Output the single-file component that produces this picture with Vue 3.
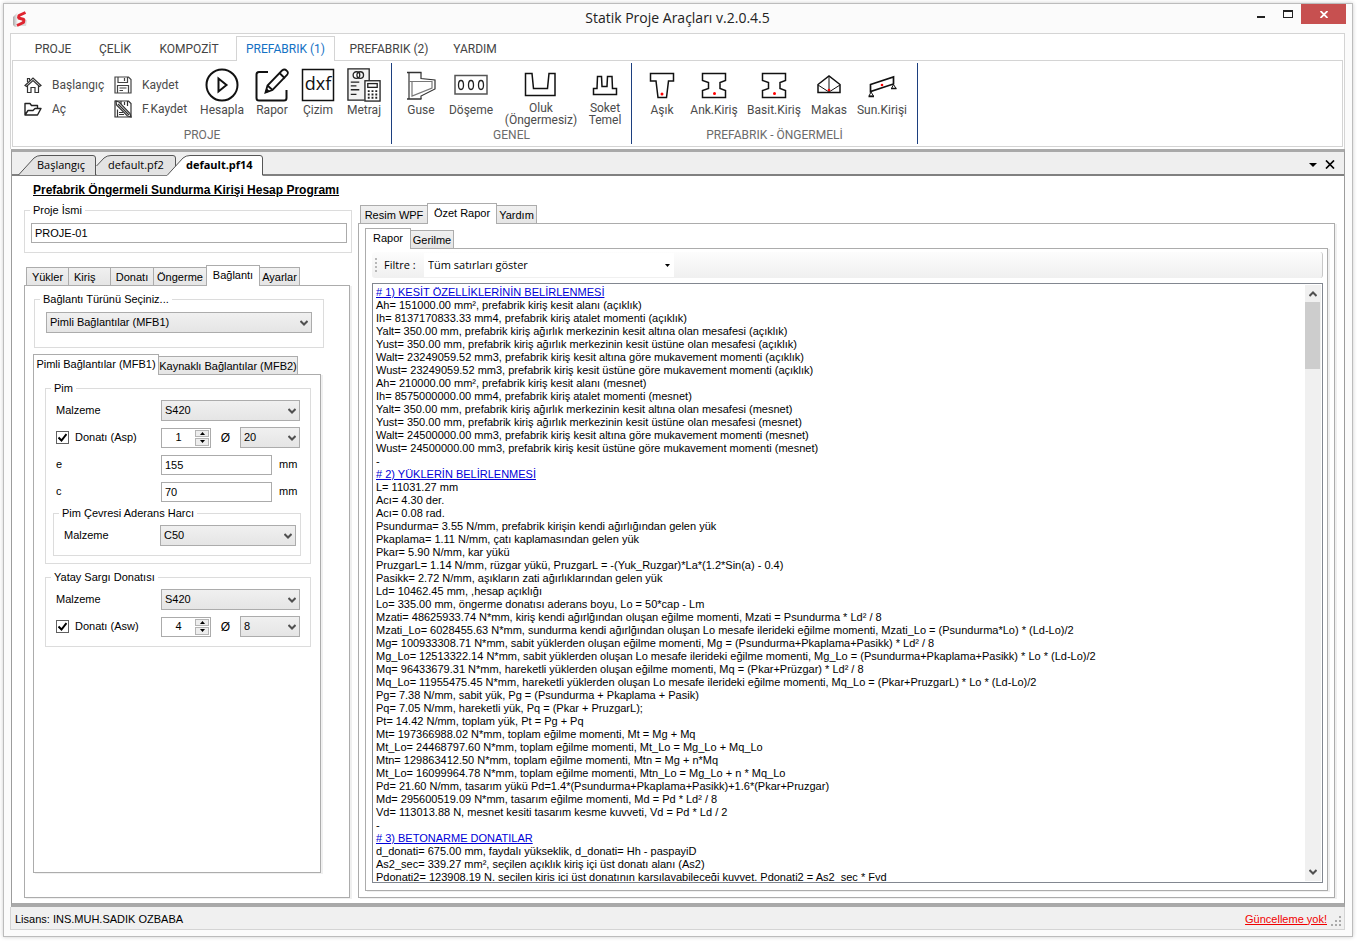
<script setup>
import { ref } from 'vue'

const ribbonTabs = [
  { text: 'PROJE', cls: 'w62' },
  { text: 'ÇELİK', cls: 'w62' },
  { text: 'KOMPOZİT', cls: 'w86' },
  { text: 'PREFABRIK (1)', cls: 'active' },
  { text: 'PREFABRIK (2)', cls: 'w108' },
  { text: 'YARDIM', cls: 'w64' },
]
const sideTabs = [
  { text: 'Yükler', cls: 'w43' },
  { text: 'Kiriş', cls: 'w43 start' },
  { text: 'Donatı', cls: 'w44' },
  { text: 'Öngerme', cls: 'w54' },
  { text: 'Bağlantı', cls: 'w54 active' },
  { text: 'Ayarlar', cls: 'w41' },
]
const projectName = ref('PROJE-01')
const aspOn = ref(true)
const aswOn = ref(true)
const aspCount = ref(1)
const aswCount = ref(4)
const eValue = ref('155')
const cValue = ref('70')

const report = `# 1) KESİT ÖZELLİKLERİNİN BELİRLENMESİ
Ah= 151000.00 mm², prefabrik kiriş kesit alanı (açıklık)
Ih= 8137170833.33 mm4, prefabrik kiriş atalet momenti (açıklık)
Yalt= 350.00 mm, prefabrik kiriş ağırlık merkezinin kesit altına olan mesafesi (açıklık)
Yust= 350.00 mm, prefabrik kiriş ağırlık merkezinin kesit üstüne olan mesafesi (açıklık)
Walt= 23249059.52 mm3, prefabrik kiriş kesit altına göre mukavement momenti (açıklık)
Wust= 23249059.52 mm3, prefabrik kiriş kesit üstüne göre mukavement momenti (açıklık)
Ah= 210000.00 mm², prefabrik kiriş kesit alanı (mesnet)
Ih= 8575000000.00 mm4, prefabrik kiriş atalet momenti (mesnet)
Yalt= 350.00 mm, prefabrik kiriş ağırlık merkezinin kesit altına olan mesafesi (mesnet)
Yust= 350.00 mm, prefabrik kiriş ağırlık merkezinin kesit üstüne olan mesafesi (mesnet)
Walt= 24500000.00 mm3, prefabrik kiriş kesit altına göre mukavement momenti (mesnet)
Wust= 24500000.00 mm3, prefabrik kiriş kesit üstüne göre mukavement momenti (mesnet)
-
# 2) YÜKLERİN BELİRLENMESİ
L= 11031.27 mm
Acı= 4.30 der.
Acı= 0.08 rad.
Psundurma= 3.55 N/mm, prefabrik kirişin kendi ağırlığından gelen yük
Pkaplama= 1.11 N/mm, çatı kaplamasından gelen yük
Pkar= 5.90 N/mm, kar yükü
PruzgarL= 1.14 N/mm, rüzgar yükü, PruzgarL = -(Yuk_Ruzgar)*La*(1.2*Sin(a) - 0.4)
Pasikk= 2.72 N/mm, aşıkların zati ağırlıklarından gelen yük
Ld= 10462.45 mm, ,hesap açıklığı
Lo= 335.00 mm, öngerme donatısı aderans boyu, Lo = 50*cap - Lm
Mzati= 48625933.74 N*mm, kiriş kendi ağırlğından oluşan eğilme momenti, Mzati = Psundurma * Ld² / 8
Mzati_Lo= 6028455.63 N*mm, sundurma kendi ağırlğından oluşan Lo mesafe ilerideki eğilme momenti, Mzati_Lo = (Psundurma*Lo) * (Ld-Lo)/2
Mg= 100933308.71 N*mm, sabit yüklerden oluşan eğilme momenti, Mg = (Psundurma+Pkaplama+Pasikk) * Ld² / 8
Mg_Lo= 12513322.14 N*mm, sabit yüklerden oluşan Lo mesafe ilerideki eğilme momenti, Mg_Lo = (Psundurma+Pkaplama+Pasikk) * Lo * (Ld-Lo)/2
Mq= 96433679.31 N*mm, hareketli yüklerden oluşan eğilme momenti, Mq = (Pkar+Prüzgar) * Ld² / 8
Mq_Lo= 11955475.45 N*mm, hareketli yüklerden oluşan Lo mesafe ilerideki eğilme momenti, Mq_Lo = (Pkar+PruzgarL) * Lo * (Ld-Lo)/2
Pg= 7.38 N/mm, sabit yük, Pg = (Psundurma + Pkaplama + Pasik)
Pq= 7.05 N/mm, hareketli yük, Pq = (Pkar + PruzgarL);
Pt= 14.42 N/mm, toplam yük, Pt = Pg + Pq
Mt= 197366988.02 N*mm, toplam eğilme momenti, Mt = Mg + Mq
Mt_Lo= 24468797.60 N*mm, toplam eğilme momenti, Mt_Lo = Mg_Lo + Mq_Lo
Mtn= 129863412.50 N*mm, toplam eğilme momenti, Mtn = Mg + n*Mq
Mt_Lo= 16099964.78 N*mm, toplam eğilme momenti, Mtn_Lo = Mg_Lo + n * Mq_Lo
Pd= 21.60 N/mm, tasarım yükü Pd=1.4*(Psundurma+Pkaplama+Pasikk)+1.6*(Pkar+Pruzgar)
Md= 295600519.09 N*mm, tasarım eğilme momenti, Md = Pd * Ld² / 8
Vd= 113013.88 N, mesnet kesiti tasarım kesme kuvveti, Vd = Pd * Ld / 2
-
# 3) BETONARME DONATILAR
d_donati= 675.00 mm, faydalı yükseklik, d_donati= Hh - paspayiD
As2_sec= 339.27 mm², seçilen açıklık kiriş içi üst donatı alanı (As2)
Pdonati2= 123908.19 N, seçilen kiriş içi üst donatının karşılayabileceği kuvvet, Pdonati2 = As2_sec * Fyd`.split('\n')
</script>

<template>
  <div class="window">
    <header class="titlebar">
      <svg class="logo" width="16" height="17" viewBox="0 0 16 17">
        <defs>
          <linearGradient id="logoShade" x1="0" x2="1"><stop offset="0" stop-color="#a8a8a8" /><stop offset="1" stop-color="#fbfbfb" /></linearGradient>
        </defs>
        <path d="M0 6L5 1V16H2L0 14Z" fill="url(#logoShade)" />
        <path d="M4 15H13L14 9L9 10Z" fill="#dcdcdc" />
        <path d="M12.500 1.500L6 4.500L5.500 7L11 8.500L10.500 11.500L4 14.500" fill="none" stroke="#df2530" stroke-width="3" stroke-linejoin="bevel" />
      </svg>
      <h1>Statik Proje Araçları v.2.0.4.5</h1>
      <div class="winbtns">
        <button type="button" aria-label="Simge durumuna küçült" class="wmin"><svg width="8" height="2"><path d="M0 0H8V2H0Z" fill="#222" /></svg></button>
        <button type="button" aria-label="Ekranı kapla" class="wmax"><svg width="10" height="8"><path d="M0 0H10V8H0ZM1 2V7H9V2Z" fill="#222" fill-rule="evenodd" /></svg></button>
        <button type="button" aria-label="Kapat" class="wclose"><svg width="8" height="7" viewBox="0 0 8 7"><path d="M0.500 0L7.500 7M7.500 0L0.500 7" stroke="#fff" stroke-width="1.800" /></svg></button>
      </div>
    </header>

    <section class="ribbon">
      <nav class="rtabs">
        <button v-for="t in ribbonTabs" :key="t.text" type="button" :class="t.cls">{{ t.text }}</button>
      </nav>
      <div class="rbody">
        <div class="rgroup g1">
          <div class="items">
            <div class="smallcol c1">
              <button type="button">
                <svg width="18" height="18" viewBox="0 0 18 18" fill="none" stroke="#333" stroke-width="1.200"><path d="M1 9.500L9 2L17 9.500L15.500 10.500L9 4.500L2.500 10.500Z" /><path d="M3.500 10V16.500H7V11.500H11V16.500H14.500V10M3.500 6V2.500H5.500V4.500" /></svg>
                Başlangıç
              </button>
              <button type="button">
                <svg width="18" height="18" viewBox="0 0 18 18" fill="none" stroke="#222" stroke-width="1.400" stroke-linejoin="round"><path d="M1 15V3.500H6L7.500 5.500H13.500V8M1 15L4 10.500H9L11 8.500H17L13.500 15H1Z" /></svg>
                Aç
              </button>
            </div>
            <div class="smallcol c2">
              <button type="button">
                <svg width="18" height="18" viewBox="0 0 18 18" fill="none" stroke="#444" stroke-width="1.200"><path d="M1 1H14.500L17 3.500V17H1ZM4 1V6.500H13.500V1M10.500 2V5M3.500 17V9.500H14.500V17M5.500 12H12.500M5.500 14.500H9" /></svg>
                Kaydet
              </button>
              <button type="button">
                <svg width="18" height="18" viewBox="0 0 18 18" fill="none" stroke="#333" stroke-width="1.200"><path d="M1 1H14.500L17 3.500V17H1ZM7 1V4M13.500 1V6M10.500 2V5M3.500 17V9.500M5 12.500H9M5 14.500H10" /><path d="M2 1L5 2L16 13.500L17 17L13.500 16L2.500 5Z" fill="#fff" /><path d="M4 4L15 15" /></svg>
                F.Kaydet
              </button>
            </div>
            <button type="button" class="big w50">
              <svg width="34" height="34" viewBox="0 0 34 34" fill="none" stroke="#111" stroke-width="2"><circle cx="17" cy="17" r="15.500" /><path d="M13.500 10.500V23.500L21.500 17Z" /></svg>
              <span>Hesapla</span>
            </button>
            <button type="button" class="big w50">
              <svg width="34" height="34" viewBox="0 0 34 34" fill="none" stroke="#111" stroke-width="2"><path d="M13 4H4Q1.500 4 1.500 6.500V30Q1.500 32.500 4 32.500H29Q31.500 32.500 31.500 30V22" /><path d="M10.500 24.500L12.500 17.500L27 2.500Q29.500 0.500 31.500 2.500Q34 4.500 32 7L17.500 22Z M24.500 5L30 10.500M12.500 17.500L17.500 22" stroke-width="1.800" /><path d="M10 25L11.500 20L15 23.500Z" fill="#111" stroke="none" /></svg>
              <span>Rapor</span>
            </button>
            <button type="button" class="big w42">
              <svg width="34" height="34" viewBox="0 0 34 34"><rect x="1.500" y="1.500" width="31" height="31" fill="#fff" stroke="#111" stroke-width="1.500" /><text x="17" y="22" text-anchor="middle" class="dxf">dxf</text></svg>
              <span>Çizim</span>
            </button>
            <button type="button" class="big w50">
              <svg width="36" height="36" viewBox="0 0 36 36" fill="none" stroke="#222" stroke-width="1.400"><path d="M18.500 34H1V1H23.500V13.500" fill="#f2f2f2" /><circle cx="10" cy="7.500" r="3.500" fill="#fff" /><circle cx="14" cy="7.500" r="3.500" /><path d="M4 15H13M4 19H10M4 23H13M4 28H10" /><rect x="19" y="13.500" width="16" height="21.500" fill="#fff" /><rect x="22" y="16.500" width="10" height="4" /><path d="M22 24.500H32M22 28H32M22 31.500H32" stroke-width="2" stroke-dasharray="2 2" /></svg>
              <span>Metraj</span>
            </button>
          </div>
          <div class="gname">PROJE</div>
        </div>

        <div class="rgroup g2">
          <div class="items">
            <button type="button" class="big w50">
              <svg width="34" height="34" viewBox="0 0 34 34" fill="none" stroke="#333" stroke-width="1.200"><path d="M3 4.500H17.500M3 31H17.500" stroke-width="1.500" /><path d="M5 4.500V31M17 4.500V10.500L31 12V21L17 28V31" /><path d="M5 13.500H28V20L8 28V13.500" stroke="#777" /></svg>
              <span>Guse</span>
            </button>
            <button type="button" class="big w50">
              <svg width="34" height="34" viewBox="0 0 34 34" fill="none" stroke="#222" stroke-width="1.300"><path d="M1 7.500H33V26H1Z" stroke="#555" stroke-width="1.500" /><ellipse cx="7" cy="17" rx="2.500" ry="4.500" /><ellipse cx="17" cy="17" rx="2.500" ry="4.500" /><ellipse cx="27" cy="17" rx="2.500" ry="4.500" /></svg>
              <span>Döşeme</span>
            </button>
            <button type="button" class="big two w90">
              <svg width="34" height="34" viewBox="0 0 34 34" fill="none" stroke="#111" stroke-width="1.500"><path d="M1.500 27.500V5.500H8L9.500 20.500H23.500L25 5.500H31V27.500Z" /></svg>
              <span>Oluk<br />(Öngermesiz)</span>
            </button>
            <button type="button" class="big two w38">
              <svg width="34" height="34" viewBox="0 0 34 34" fill="none" stroke="#111" stroke-width="1.500"><path d="M5.500 26.500V20.500H9L9.500 8.500H13.500L14 18.500H19L19.500 8.500H24L24.500 20.500H28.500V26.500Z" /></svg>
              <span>Soket<br />Temel</span>
            </button>
          </div>
          <div class="gname">GENEL</div>
        </div>

        <div class="rgroup g3">
          <div class="items">
            <button type="button" class="big w50">
              <svg width="34" height="34" viewBox="0 0 34 34" fill="none" stroke="#111" stroke-width="1.500"><path d="M5.500 5.500H28.500V13H23.500L21.500 29.500H13L11 13H5.500Z" /><circle cx="17" cy="26" r="1.500" fill="#f00" stroke="none" /></svg>
              <span>Aşık</span>
            </button>
            <button v-for="b in [{ t: 'Ank.Kiriş', c: 'w54' }, { t: 'Basit.Kiriş', c: 'w66' }]" :key="b.t" type="button" class="big" :class="b.c">
              <svg width="34" height="34" viewBox="0 0 34 34" fill="none" stroke="#111" stroke-width="1.500"><path d="M5.500 5.500H28.500V12.500L23 14.500V20.500L28.500 22.500V29.500H5.500V22.500L11.500 20.500V14.500L5.500 12.500Z" /><circle cx="17.500" cy="25.500" r="1.500" fill="#f00" stroke="none" /></svg>
              <span>{{ b.t }}</span>
            </button>
            <button type="button" class="big w44">
              <svg width="34" height="34" viewBox="0 0 34 34" fill="none" stroke="#111" stroke-width="1.500"><path d="M6 24.500V16.500L17 8L28 16.500V24.500Z" /><path d="M17 8V23M6 17L17 24L28 17" stroke-width="1" /><circle cx="17" cy="22" r="1.300" fill="#f00" stroke="none" /></svg>
              <span>Makas</span>
            </button>
            <button type="button" class="big w62">
              <svg width="34" height="34" viewBox="0 0 34 34" fill="none" stroke="#111" stroke-width="1.700"><path d="M5.500 16.500L28.500 9V16L5.500 23.500Z" /><path d="M6 24L4 28H8.500ZM28.500 16.500L26.500 20.500H31Z" stroke-width="1" /><path d="M3.500 28.500H9M26 20.500H31.500" stroke-width="1.500" /><circle cx="17" cy="17" r="1.300" fill="#f00" stroke="none" /></svg>
              <span>Sun.Kirişi</span>
            </button>
          </div>
          <div class="gname">PREFABRIK - ÖNGERMELİ</div>
        </div>
      </div>
    </section>

    <main class="dock">
      <nav class="doctabs">
        <button type="button" class="dt d1">
          <svg width="79" height="20" viewBox="0 0 79 20"><path d="M0.500 20L16 3Q19 0.500 23 0.500H75Q77.500 0.500 77.500 3V20" fill="#e3e3e3" stroke="#555" /></svg><span>Başlangıç</span>
        </button>
        <button type="button" class="dt d2">
          <svg width="81" height="20" viewBox="0 0 81 20"><path d="M0.500 20V11L8 3Q11 0.500 15 0.500H77Q79.500 0.500 79.500 3V20" fill="#e3e3e3" /><path d="M0.500 11L8 3Q11 0.500 15 0.500H77Q79.500 0.500 79.500 3V20" fill="none" stroke="#555" /></svg><span>default.pf2</span>
        </button>
        <button type="button" class="dt d3">
          <svg width="97" height="22" viewBox="0 0 97 22"><path d="M0.500 20L16 3Q19 0.500 23 0.500H93Q95.500 0.500 95.500 3V20V22H0Z" fill="#fff" /><path d="M0.500 20L16 3Q19 0.500 23 0.500H93Q95.500 0.500 95.500 3V20" fill="none" stroke="#555" /></svg><span>default.pf14</span>
        </button>
        <div class="dtools">
          <button type="button" aria-label="Sekme listesi"><svg width="8" height="4"><path d="M0 0H8L4 4Z" fill="#000" /></svg></button>
          <button type="button" aria-label="Sekmeyi kapat"><svg width="10" height="9" viewBox="0 0 10 9"><path d="M1 0.500L9 8.500M9 0.500L1 8.500" stroke="#000" stroke-width="1.700" /></svg></button>
        </div>
      </nav>

      <div class="doc">
        <div class="left">
          <h2>Prefabrik Öngermeli Sundurma Kirişi Hesap Programı</h2>
          <fieldset class="fs proj">
            <legend><label for="pname">Proje İsmi</label></legend>
            <input id="pname" v-model="projectName" type="text" class="tb" />
          </fieldset>

          <div class="tabs side">
            <button v-for="t in sideTabs" :key="t.text" type="button" :class="t.cls">{{ t.text }}</button>
          </div>
          <div class="panel sidepanel">
            <fieldset class="fs conn">
              <legend><label for="ctype">Bağlantı Türünü Seçiniz...</label></legend>
              <div class="sel">
                <select id="ctype"><option>Pimli Bağlantılar (MFB1)</option><option>Kaynaklı Bağlantılar (MFB2)</option></select>
                <svg width="8" height="6" viewBox="0 0 8 6"><path d="M0.500 1L4 4.500L7.500 1" /></svg>
              </div>
            </fieldset>

            <div class="tabs mfb">
              <button type="button" class="w126 active">Pimli Bağlantılar (MFB1)</button>
              <button type="button" class="w140">Kaynaklı Bağlantılar (MFB2)</button>
            </div>
            <div class="panel mfbpanel">
              <fieldset class="fs pim">
                <legend>Pim</legend>
                <div class="row">
                  <label for="pmat">Malzeme</label>
                  <div class="sel"><select id="pmat"><option>S420</option></select><svg width="8" height="6" viewBox="0 0 8 6"><path d="M0.500 1L4 4.500L7.500 1" /></svg></div>
                </div>
                <div class="row">
                  <label class="chk"><span class="cbx"><input v-model="aspOn" type="checkbox" /><svg v-if="aspOn" width="9" height="9" viewBox="0 0 9 9"><path d="M0.500 4.500L3.500 7.500L8.500 1" /></svg></span>Donatı (Asp)</label>
                  <div class="multi">
                    <div class="spin">
                      <input v-model.number="aspCount" type="number" aria-label="Donatı (Asp) adedi" />
                      <div class="ud"><button type="button" aria-label="Artır" @click="aspCount++"><svg width="5" height="3"><path d="M0 3L2.500 0L5 3Z" /></svg></button><button type="button" aria-label="Azalt" @click="aspCount--"><svg width="5" height="3"><path d="M0 0L2.500 3L5 0Z" /></svg></button></div>
                    </div>
                    <label for="pdia" class="dia">Ø</label>
                    <div class="sel"><select id="pdia"><option>20</option></select><svg width="8" height="6" viewBox="0 0 8 6"><path d="M0.500 1L4 4.500L7.500 1" /></svg></div>
                  </div>
                </div>
                <div class="row">
                  <label for="ev">e</label>
                  <div class="unit"><input id="ev" v-model="eValue" type="text" class="tb" /><span>mm</span></div>
                </div>
                <div class="row">
                  <label for="cv">c</label>
                  <div class="unit"><input id="cv" v-model="cValue" type="text" class="tb" /><span>mm</span></div>
                </div>
                <fieldset class="fs harc">
                  <legend>Pim Çevresi Aderans Harcı</legend>
                  <div class="row">
                    <label for="hmat">Malzeme</label>
                    <div class="sel"><select id="hmat"><option>C50</option></select><svg width="8" height="6" viewBox="0 0 8 6"><path d="M0.500 1L4 4.500L7.500 1" /></svg></div>
                  </div>
                </fieldset>
              </fieldset>

              <fieldset class="fs sargi">
                <legend>Yatay Sargı Donatısı</legend>
                <div class="row">
                  <label for="smat">Malzeme</label>
                  <div class="sel"><select id="smat"><option>S420</option></select><svg width="8" height="6" viewBox="0 0 8 6"><path d="M0.500 1L4 4.500L7.500 1" /></svg></div>
                </div>
                <div class="row">
                  <label class="chk"><span class="cbx"><input v-model="aswOn" type="checkbox" /><svg v-if="aswOn" width="9" height="9" viewBox="0 0 9 9"><path d="M0.500 4.500L3.500 7.500L8.500 1" /></svg></span>Donatı (Asw)</label>
                  <div class="multi">
                    <div class="spin">
                      <input v-model.number="aswCount" type="number" aria-label="Donatı (Asw) adedi" />
                      <div class="ud"><button type="button" aria-label="Artır" @click="aswCount++"><svg width="5" height="3"><path d="M0 3L2.500 0L5 3Z" /></svg></button><button type="button" aria-label="Azalt" @click="aswCount--"><svg width="5" height="3"><path d="M0 0L2.500 3L5 0Z" /></svg></button></div>
                    </div>
                    <label for="sdia" class="dia">Ø</label>
                    <div class="sel"><select id="sdia"><option>8</option></select><svg width="8" height="6" viewBox="0 0 8 6"><path d="M0.500 1L4 4.500L7.500 1" /></svg></div>
                  </div>
                </div>
              </fieldset>
            </div>
          </div>
        </div>

        <div class="right">
          <div class="tabs outer">
            <button type="button" class="w68">Resim WPF</button>
            <button type="button" class="w70 active">Özet Rapor</button>
            <button type="button" class="w41">Yardım</button>
          </div>
          <div class="panel outerpanel">
            <div class="tabs inner">
              <button type="button" class="w46 active">Rapor</button>
              <button type="button" class="w44">Gerilme</button>
            </div>
            <div class="panel innerpanel">
              <div class="toolbar">
                <i class="grip"></i>
                <label for="filter">Filtre :</label>
                <div class="filter">
                  <select id="filter"><option>Tüm satırları göster</option></select>
                  <svg width="5" height="3"><path d="M0 0H5L2.500 3Z" /></svg>
                </div>
              </div>
              <div class="report">
                <div class="lines">
                  <div v-for="(l, i) in report" :key="i" :class="{ head: l.startsWith('#') }"><span>{{ l }}</span></div>
                </div>
                <div class="scroll">
                  <svg width="8" height="6" viewBox="0 0 8 6"><path d="M0.500 5L4 1.500L7.500 5" /></svg>
                  <div class="track"><div class="thumb"></div></div>
                  <svg width="8" height="6" viewBox="0 0 8 6"><path d="M0.500 1L4 4.500L7.500 1" /></svg>
                </div>
              </div>
            </div>
          </div>
        </div>
      </div>
    </main>

    <footer class="status">
      <span>Lisans: INS.MUH.SADIK OZBABA</span>
      <a href="#">Güncelleme yok!</a>
      <svg width="11" height="11" viewBox="0 0 11 11" fill="#aaa"><path d="M8 0H10V2H8ZM4 4H6V6H4ZM8 4H10V6H8ZM0 8H2V10H0ZM4 8H6V10H4ZM8 8H10V10H8Z" /></svg>
    </footer>
  </div>
</template>

<style>
html, body { background: #fff; }
body { overflow: hidden; }
</style>

<style scoped>
* { box-sizing: border-box; }
.window {
  height: calc(100vh - 8px); margin: 3px 4px 5px 3px; padding: 0 7px 6px 6px;
  display: flex; flex-direction: column;
  background: #fbfbfb; border: 1px solid #bcbcbc; box-shadow: 0 0 4px #ccc;
  font-family: "Liberation Sans", Arial, sans-serif; font-size: 11px; line-height: 13px; color: #000;
}
button, input, select { font: inherit; color: inherit; margin: 0; padding: 0; border: 0; background: none; border-radius: 0; outline: 0; }
svg { display: block; flex: none; }

.titlebar { display: grid; grid-template-columns: 1fr auto 1fr; height: 29px; }
.logo { margin: 7px 0 0 3px; }
.titlebar h1 { margin: 0; font: 400 14px/28px "Open Sans", sans-serif; color: #222; }
.winbtns { display: flex; justify-content: flex-end; align-items: flex-start; margin-right: -1px; }
.winbtns button { display: flex; justify-content: center; height: 20px; width: 27px; }
.winbtns .wmin { padding-top: 12px; }
.winbtns .wmax { padding-top: 6px; }
.winbtns .wclose { width: 45px; background: #c75050; padding-top: 7px; }

.ribbon { background: #fff; border: 1px solid #d4d4d4; border-bottom: 0; padding: 2px 1px; flex: none; }
.rtabs { display: flex; padding-left: 10px; font: 400 12px/24px Roboto, sans-serif; color: #444; height: 24px; }
.rtabs button { height: 25px; white-space: nowrap; }
.rtabs .active { position: relative; width: 99px; margin-left: 4px; border: 1px solid #d4d4d4; border-bottom: 0; background: #fff; color: #1471c4; line-height: 22px; }
.rbody { display: flex; height: 87px; border: 1px solid #d4d4d4; padding: 2px 0; }
.rgroup { display: flex; flex-direction: column; border-right: 1px solid #1c3f7f; color: #4b4b4b; font: 400 12px/12px Roboto, sans-serif; }
.items { display: flex; flex: 1; min-height: 0; }
.g1 .items { padding-left: 11px; padding-right: 2px; }
.g2 .items { padding-left: 4px; padding-right: 7px; }
.g3 .items { padding-left: 5px; padding-right: 4px; }
.smallcol { padding-top: 10px; }
.smallcol button { display: flex; align-items: center; gap: 10px; height: 24px; white-space: nowrap; }
.c1 { width: 90px; }
.c2 { width: 83px; }
.big { display: flex; flex-direction: column; align-items: center; justify-content: flex-start; padding-top: 5px; }
.big span { white-space: nowrap; margin-top: 2px; }
.big.two span { margin-top: 0; }
.big svg { height: 34px; }
.dxf { font: 18px "Open Sans", sans-serif; fill: #111; }
.gname { text-align: center; color: #6b6b6b; line-height: 14px; height: 16px; flex: none; }

.w41 { width: 41px; } .w42 { width: 42px; } .w43 { width: 43px; } .w44 { width: 44px; } .w38 { width: 38px; }
.w46 { width: 46px; } .w50 { width: 50px; } .w54 { width: 54px; } .w62 { width: 62px; } .w64 { width: 64px; }
.w66 { width: 66px; } .w68 { width: 68px; } .w70 { width: 70px; } .w86 { width: 86px; } .w90 { width: 90px; }
.w108 { width: 108px; } .w126 { width: 126px; } .w140 { width: 140px; }

.dock { flex: 1; min-height: 0; display: flex; flex-direction: column; border: 1px solid #9c9c9c; border-top: 3px solid #a9a9a9; border-bottom: 4px solid #a9a9a9; margin-left: 1px; background: #fff; }
.doctabs { display: flex; height: 24px; padding: 3px 9px 0 6px; background: #efefef; border-bottom: 2px solid #808080; font: 400 11px/18px "Open Sans", sans-serif; flex: none; }
.dt { position: relative; height: 20px; text-align: left; white-space: nowrap; }
.dt svg { position: absolute; left: 0; top: 0; }
.dt span { position: relative; }
.d1 { width: 78px; padding-left: 19px; }
.d2 { width: 80px; padding-left: 12px; }
.d3 { width: 96px; margin-left: -9px; padding-left: 19px; font-weight: 700; }
.dtools { margin-left: auto; display: flex; align-items: center; gap: 8px; }

.doc { flex: 1; min-height: 0; display: flex; gap: 6px; padding: 0 9px 5px 12px; }
.left { width: 328px; flex: none; display: flex; flex-direction: column; }
.left h2 { margin: 8px 0 7px 9px; font-size: 12px; line-height: 13px; font-weight: 700; text-decoration: underline; white-space: nowrap; }
.fs { margin: 0; padding: 0; border: 1px solid #dcdcdc; min-width: 0; }
legend { margin-left: -5px; padding: 0 3px; line-height: 13px; height: 13px; }
.tb { border: 1px solid #ababab; background: #fff; height: 20px; padding: 0 3px; width: 100%; display: block; }
.proj { padding: 6px 4px 9px 6px; }
.proj legend { margin-left: -1px; }
.tabs { display: flex; align-items: flex-end; height: 20px; flex: none; }
.tabs button { height: 18px; border: 1px solid #acacac; border-bottom: 0; margin-left: -1px; background: linear-gradient(#f0f0f0, #e5e5e5); text-align: center; white-space: nowrap; padding-top: 2px; flex: none; }
.tabs button:first-child { margin-left: 0; }
.tabs .active { position: relative; z-index: 1; height: 21px; padding: 0 0 2px; background: #fff; margin-bottom: -1px; }
.tabs .start { text-align: left; text-indent: 5px; }
.side { margin: 12px 0 0 2px; }
.panel { border: 1px solid #acacac; background: #fff; box-shadow: 2px 1px 0 #f0f0f0; display: flex; flex-direction: column; flex: 1; min-height: 0; }
.sidepanel { width: 326px; padding: 7px 0 24px; }
.conn { margin: 0 25px 0 9px; padding: 6px 11px 14px 11px; }
.conn legend { margin-left: -6px; }
.mfb { margin: 6px 0 0 8px; }
.mfbpanel { margin: 0 28px 0 8px; padding: 7px 9px 0 11px; }
.sel { position: relative; }
.sel select { appearance: none; display: block; width: 100%; height: 21px; padding: 0 3px; border: 1px solid #acacac; background: linear-gradient(#f0f0f0, #e5e5e5); }
.sel svg { position: absolute; right: 4px; top: 8px; pointer-events: none; fill: none; stroke: #505050; stroke-width: 2; }
.row { display: grid; grid-template-columns: 105px 1fr; align-items: center; height: 21px; }
.row + .row { margin-top: 6px; }
.pim { padding: 5px 10px 7px 10px; }
.harc { margin: 5px -1px 0 -3px; padding: 5px 4px 9px 10px; }
.harc .row { grid-template-columns: 96px 1fr; }
.sargi { margin-top: 7px; padding: 5px 10px 9px 10px; }
.chk { display: flex; align-items: center; gap: 6px; }
.cbx { position: relative; width: 13px; height: 13px; }
.cbx input { appearance: none; display: block; width: 13px; height: 13px; border: 1px solid #606060; background: #fff; }
.cbx svg { position: absolute; left: 2px; top: 2px; fill: none; stroke: #000; stroke-width: 2; pointer-events: none; }
.multi { display: grid; grid-template-columns: 50px 29px 1fr; align-items: center; }
.spin { display: flex; height: 20px; border: 1px solid #ababab; padding-right: 1px; }
.spin input { flex: 1; min-width: 0; text-align: center; appearance: textfield; }
.spin input::-webkit-inner-spin-button { appearance: none; }
.ud { width: 14px; display: flex; flex-direction: column; gap: 1px; padding: 1px 0; }
.ud button { flex: 1; display: flex; align-items: center; justify-content: center; border: 1px solid #b4b4b4; background: #ededed; }
.dia { text-align: center; font-size: 12px; padding-top: 2px; }
.unit { display: grid; grid-template-columns: 111px 1fr; gap: 7px; align-items: center; }

.right { flex: 1; min-width: 0; padding-top: 27px; display: flex; flex-direction: column; }
.outer { margin-left: 2px; }
.outerpanel { padding: 4px 6px 6px; }
.innerpanel { padding: 3px 4px 7px 6px; }
.toolbar { display: flex; align-items: center; height: 26px; flex: none; background: linear-gradient(#fdfdfd, #f0f0f0); border-right: 1px solid #c8c8c8; border-radius: 3px; font: 400 11px/16px "Open Sans", sans-serif; }
.grip { width: 2px; height: 14px; margin: 0 7px 0 3px; background: repeating-linear-gradient(#b8b8b8 0 2px, transparent 2px 4px); }
.toolbar label { width: 40px; }
.filter { position: relative; width: 250px; height: 24px; background: #fff; }
.filter select { appearance: none; width: 100%; height: 24px; padding-left: 4px; }
.filter svg { position: absolute; right: 4px; top: 11px; pointer-events: none; }
.report { margin-top: 5px; flex: 1; min-height: 0; display: flex; border: 1px solid #828790; padding: 1px; }
.lines { flex: 1; min-width: 0; overflow: hidden; padding: 1px 0 0 2px; white-space: nowrap; }
.head span { color: #0000d8; text-decoration: underline; }
.scroll { width: 16px; background: #f0f0f0; display: flex; flex-direction: column; align-items: center; padding: 6px 0; }
.scroll svg { fill: none; stroke: #505050; stroke-width: 2; }
.track { flex: 1; width: 100%; padding: 5px 1px 0 0; }
.thumb { height: 67px; background: #cdcdcd; }

.status { display: flex; align-items: center; height: 23px; flex: none; background: #f0f0f0; border: 1px solid #d4d4d4; border-top: 0; padding: 2px 2px 0 4px; }
.status a { margin-left: auto; color: #f00000; margin-right: 4px; }
.status svg { align-self: flex-end; margin-bottom: 2px; }
</style>
